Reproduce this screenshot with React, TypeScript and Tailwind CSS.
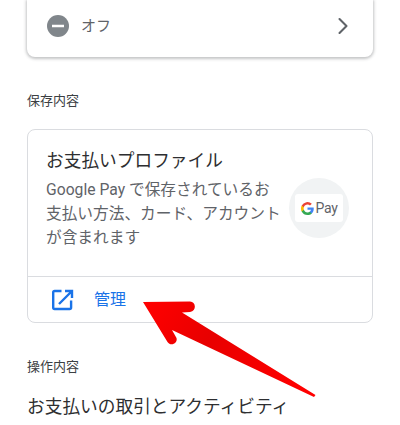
import { ChevronRight } from "lucide-react";

const font = { fontFamily: '"Roboto", "Noto Sans CJK JP", sans-serif' };

const MinusCircle = () => (
    <svg viewBox="0 0 22 22" className="size-[22px] shrink-0">
        <circle cx="11" cy="11" r="11" fill="#80868b" />
        <rect x="5" y="9.75" width="12" height="2.5" fill="#fff" />
    </svg>
);

const ExternalLink = () => (
    <svg viewBox="0 0 22 22" fill="none" stroke="#1a73e8" strokeWidth="2.4" className="size-[22px] shrink-0">
        <path d="M9.5 2H2.6C1.700 2 1.200 2.600 1.200 3.500v15c0 .9.5 1.500 1.400 1.500h15c.9 0 1.500-.6 1.500-1.500v-7" />
        <path d="M13 2h7v7M20 2 7 15" />
    </svg>
);

const GPayBadge = () => (
    <div className="flex size-[60px] shrink-0 items-center justify-center rounded-full bg-[#f1f3f4]">
        <div className="flex h-[28px] w-[48px] items-center justify-center gap-[2px] rounded-[3px] bg-white">
            <svg viewBox="0 0 24 24" className="size-[13px]">
                <path fill="#4285f4" d="M23.500 12.300c0-.8-.1-1.600-.2-2.300H12v4.500h6.500a5.600 5.600 0 0 1-2.400 3.600v3h3.900c2.200-2.100 3.500-5.100 3.500-8.800z" />
                <path fill="#34a853" d="M12 24c3.200 0 6-1.100 8-2.900l-3.900-3c-1.100.7-2.500 1.200-4.100 1.200-3.100 0-5.800-2.100-6.700-5H1.300v3.100A12 12 0 0 0 12 24z" />
                <path fill="#fbbc04" d="M5.300 14.300a7.200 7.200 0 0 1 0-4.600V6.600H1.300a12 12 0 0 0 0 10.800z" />
                <path fill="#ea4335" d="M12 4.800c1.800 0 3.300.6 4.600 1.800l3.400-3.400A12 12 0 0 0 1.300 6.600l4 3.100c.9-2.800 3.600-4.900 6.700-4.900z" />
            </svg>
            <span className="text-[14px] leading-none font-normal tracking-[-0.3px] text-[#5f6368]">Pay</span>
        </div>
    </div>
);

const Arrow = () => (
    <svg viewBox="0 0 400 425" className="pointer-events-none absolute top-0 left-0 size-full">
        <defs>
            <linearGradient id="arrowFill" x1="150" y1="300" x2="300" y2="390" gradientUnits="userSpaceOnUse">
                <stop offset="0" stopColor="#ff0000" />
                <stop offset="0.4" stopColor="#e80000" />
                <stop offset="1" stopColor="#ff0000" />
            </linearGradient>
        </defs>
        <path
            d="M143 302 L190 301.500 C196 301.500 197 311 190 312 L182 312.500 L315.500 395 L314 397 L172 330 L176.500 338 C178 343 171 347 167.500 342 Z"
            fill="url(#arrowFill)"
        />
    </svg>
);

export default function App() {
    return (
        <div className="relative h-[425px] w-[400px] overflow-hidden bg-white" style={font}>
            <div className="px-[27px]">
                {/* status card, cut off by the top of the window */}
                <div className="flex h-[57px] items-center rounded-b-[8px] bg-white pr-[20px] pb-[5px] pl-[20px] shadow-[0_1px_3px_1px_rgba(60,64,67,0.3)]">
                    <MinusCircle />
                    <span className="ml-[12px] flex-1 text-[15px] text-[#5f6368]">オフ</span>
                    <ChevronRight className="mr-[-4px] size-[28px] text-[#5f6368]" strokeWidth={1.8} />
                </div>

                <p className="mt-[36px] text-[13px] leading-[16px] text-[#3c4043]">保存内容</p>

                {/* saved payment profile */}
                <div className="mt-[20px] rounded-[8px] border border-[#dadce0]">
                    <div className="h-[146px] pt-[19px] pr-[23px] pl-[18px]">
                        <h2 className="text-[17.7px] leading-[24px] text-[#2d2e30]">お支払いプロファイル</h2>
                        <div className="mt-[5px] flex items-start justify-between">
                            <p className="w-[237px] text-[15.7px] leading-[24px] text-[#5f6368]">
                                Google Pay で保存されているお支払い方法、カード、アカウントが含まれます
                            </p>
                            <GPayBadge />
                        </div>
                    </div>
                    <div className="flex h-[46px] items-center border-t border-[#dadce0] pl-[24px]">
                        <ExternalLink />
                        <span className="ml-[20px] text-[16px] text-[#1a73e8]">管理</span>
                    </div>
                </div>

                <p className="mt-[36px] text-[13px] leading-[16px] text-[#3c4043]">操作内容</p>
                <h2 className="mt-[20px] text-[17.7px] leading-[24px] text-[#2d2e30]">お支払いの取引とアクティビティ</h2>
            </div>
            <Arrow />
        </div>
    );
}
